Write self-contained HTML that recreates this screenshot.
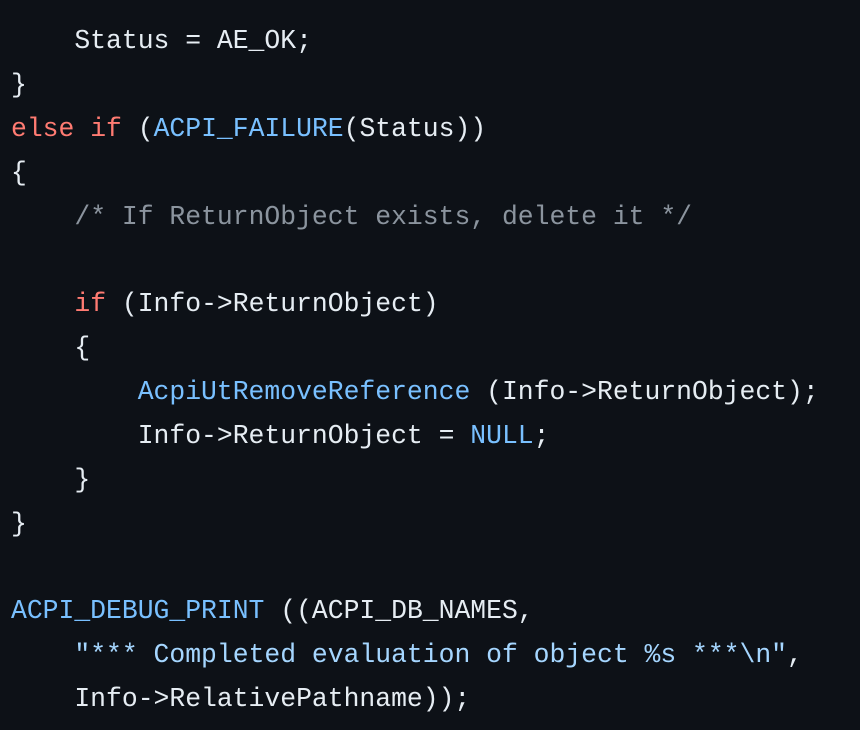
<!DOCTYPE html>
<html><head><style>
html,body{margin:0;padding:0;background:#0d1117;width:860px;height:730px;overflow:hidden}
pre{margin:0;position:absolute;left:11px;top:20px;font-family:"Liberation Mono",monospace;font-size:26.4px;line-height:43.87px;color:#e6edf3}
.k{color:#ff7b72}.b{color:#79c0ff}.c{color:#8b949e}.s{color:#a5d6ff}
</style></head><body>
<pre>    Status = AE_OK;
}
<span class="k">else</span> <span class="k">if</span> (<span class="b">ACPI_FAILURE</span>(Status))
{
    <span class="c">/* If ReturnObject exists, delete it */</span>

    <span class="k">if</span> (Info-&gt;ReturnObject)
    {
        <span class="b">AcpiUtRemoveReference</span> (Info-&gt;ReturnObject);
        Info-&gt;ReturnObject = <span class="b">NULL</span>;
    }
}

<span class="b">ACPI_DEBUG_PRINT</span> ((ACPI_DB_NAMES,
    <span class="s">"*** Completed evaluation of object %s ***\n"</span>,
    Info-&gt;RelativePathname));</pre>
</body></html>
